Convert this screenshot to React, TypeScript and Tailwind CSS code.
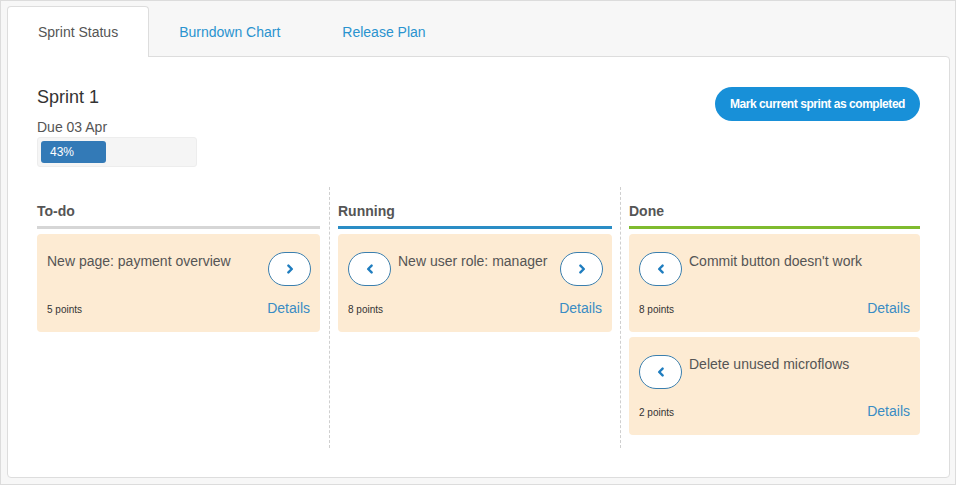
import React from 'react';

type Card = {
  title: string;
  points: number;
  back?: boolean;
  next?: boolean;
};

type Column = {
  id: string;
  label: string;
  bar: string;
  width: string;
  cards: Card[];
};

const columns: Column[] = [
  {
    id: 'todo',
    label: 'To-do',
    bar: 'border-[#d6d6d6]',
    width: 'w-[292px] pr-[9px]',
    cards: [{ title: 'New page: payment overview', points: 5, next: true }],
  },
  {
    id: 'running',
    label: 'Running',
    bar: 'border-[#2a8dc5]',
    width: 'w-[291px] px-[8px] border-l border-dashed border-l-[#cfcfcf]',
    cards: [{ title: 'New user role: manager', points: 8, back: true, next: true }],
  },
  {
    id: 'done',
    label: 'Done',
    bar: 'border-[#7fbb2e]',
    width: 'w-[300px] pl-[8px] border-l border-dashed border-l-[#cfcfcf]',
    cards: [
      { title: "Commit button doesn't work", points: 8, back: true },
      { title: 'Delete unused microflows', points: 2, back: true },
    ],
  },
];

const Chevron: React.FC<{ dir: 'left' | 'right' }> = ({ dir }) => (
  <svg width="10" height="10" viewBox="0 0 10 10" className="block">
    <path
      d={dir === 'right' ? 'M3.4 1.6 L6.8 5 L3.4 8.4' : 'M6.6 1.6 L3.2 5 L6.6 8.4'}
      fill="none"
      stroke="#1f7dbf"
      strokeWidth="2.4"
      strokeLinecap="round"
      strokeLinejoin="round"
    />
  </svg>
);

const MoveButton: React.FC<{ dir: 'left' | 'right' }> = ({ dir }) => (
  <button className="mt-[1px] w-[43px] h-[34px] shrink-0 rounded-[18px] border border-[#3b7fae] bg-white flex items-center justify-center">
    <Chevron dir={dir} />
  </button>
);

const StoryCard: React.FC<{ card: Card }> = ({ card }) => (
  <div className="h-[98px] rounded-[4px] bg-[#fdebd3] px-[10px] pt-[17px]">
    <div className="flex items-start h-[36px]">
      {card.back && (
        <div className="mr-[7px]">
          <MoveButton dir="left" />
        </div>
      )}
      <div className="flex-1 text-[14px] leading-[20px] text-[#555]">{card.title}</div>
      {card.next && (
        <div className="mr-[-1px]">
          <MoveButton dir="right" />
        </div>
      )}
    </div>
    <div className="mt-[11px] flex items-baseline justify-between">
      <span className="text-[10px] text-[#333]">{card.points} points</span>
      <span className="text-[14px] leading-[20px] text-[#3a8cc4]">Details</span>
    </div>
  </div>
);

export default function App() {
  return (
    <div
      className="w-[956px] h-[485px] bg-[#f7f7f7] border border-[#dcdcdc] pt-[5px] pl-[6px]"
      style={{ fontFamily: '"Liberation Sans", Arial, sans-serif' }}
    >
      <div className="flex h-[51px] items-stretch">
        <div className="relative z-10 px-[30px] rounded-t-[4px] border border-b-0 border-[#dddddd] bg-white text-[14px] text-[#555] flex items-center pt-[1px]">
          Sprint Status
        </div>
        <div className="px-[30px] text-[14px] text-[#2a93cf] flex items-center pt-[1px]">Burndown Chart</div>
        <div className="pl-[32px] pr-[30px] text-[14px] text-[#2a93cf] flex items-center pt-[1px]">Release Plan</div>
      </div>

      <div className="-mt-px w-[943px] h-[422px] bg-white border border-[#dddddd] rounded-tr-[4px] rounded-b-[4px] px-[29px] pt-[30px]">
        <div className="flex items-start justify-between">
          <div>
            <div className="text-[18px] leading-[20px] text-[#333]">Sprint 1</div>
            <div className="mt-[10px] text-[14px] leading-[20px] text-[#555]">Due 03 Apr</div>
            <div className="w-[160px] h-[30px] p-[3px] bg-[#f5f5f5] border border-[#ededed] rounded-[3px]">
              <div className="h-full w-[43%] rounded-[3px] bg-[#337ab7] pl-[9px] flex items-center text-[12px] text-white">
                43%
              </div>
            </div>
          </div>
          <button className="h-[34px] px-[15px] rounded-full bg-[#1890d8] text-white text-[12px] font-bold tracking-[-0.45px]">
            Mark current sprint as completed
          </button>
        </div>

        <div className="mt-[20px] flex">
          {columns.map((col) => (
            <div key={col.id} className={`${col.width} h-[261px]`}>
              <div className={`pt-[14px] pb-[5px] border-b-[3px] ${col.bar} text-[14px] leading-[20px] font-bold text-[#555]`}>
                {col.label}
              </div>
              <div className="mt-[5px] flex flex-col gap-[5px]">
                {col.cards.map((card) => (
                  <StoryCard key={card.title} card={card} />
                ))}
              </div>
            </div>
          ))}
        </div>
      </div>
    </div>
  );
}
